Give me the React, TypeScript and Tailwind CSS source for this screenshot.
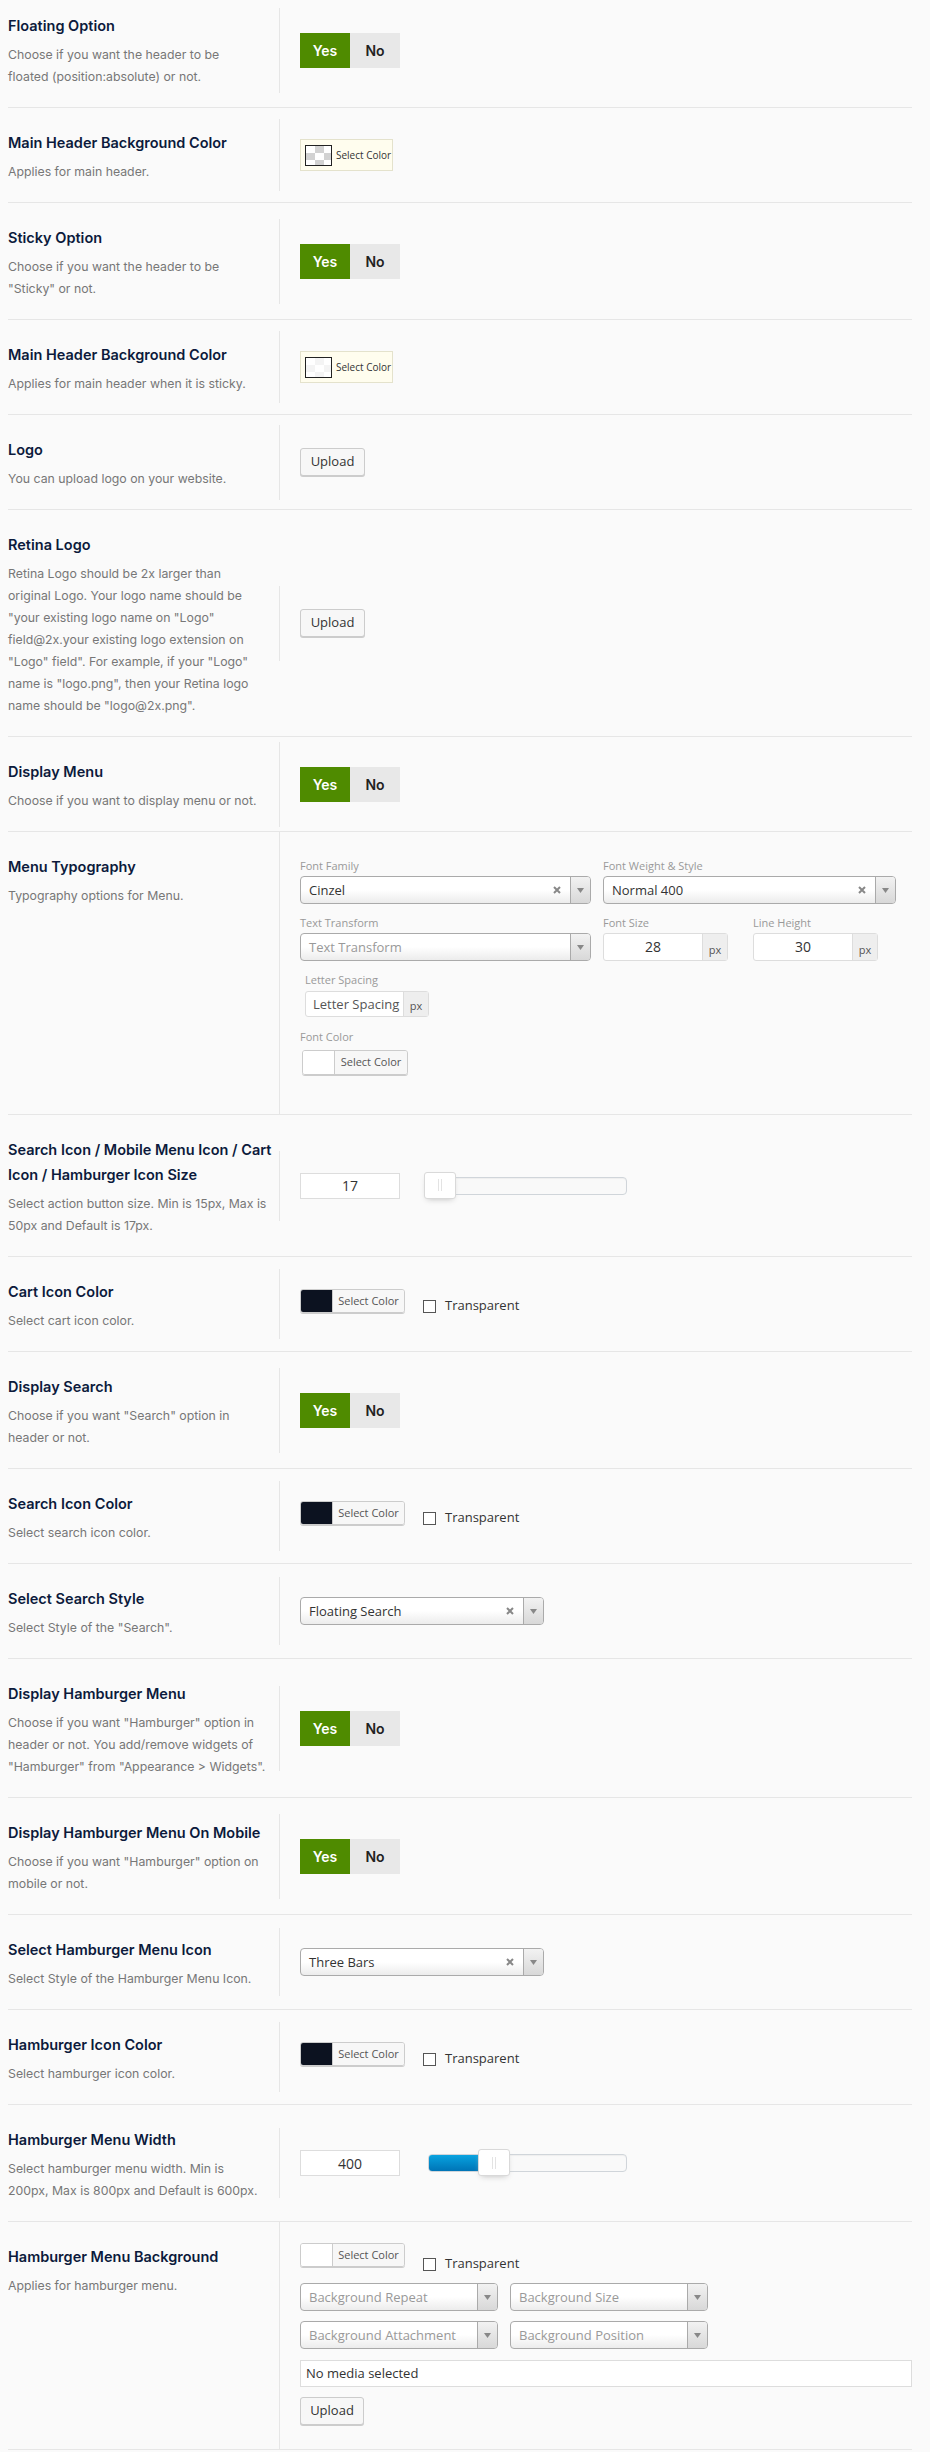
import React from "react";

function Lines({ lines }: { lines: string[] }) {
    return (
        <>
            {lines.map((l, i) => (
                <div key={i} className="whitespace-nowrap">
                    {l}
                </div>
            ))}
        </>
    );
}

function Row({
    title,
    desc,
    first,
    full,
    children,
}: {
    title: string[];
    desc: string[];
    first?: boolean;
    full?: boolean;
    children: React.ReactNode;
}) {
    return (
        <div className={full ? "flex items-stretch border-b border-[#e6e6e6]" : "flex items-center border-b border-[#e6e6e6]"}>
            <div className={first ? "w-[271px] shrink-0 self-start pt-[13px] pb-[19px]" : "w-[271px] shrink-0 self-start pt-[22px] pb-[19px]"}>
                <div className="text-[14.5px] leading-[25px] font-semibold text-[#0c1a3c]">
                    <Lines lines={title} />
                </div>
                <div className="mt-[6px] text-[12.3px] leading-[22px] text-[#777]">
                    <Lines lines={desc} />
                </div>
            </div>
            <div
                className={
                    full
                        ? "flex-1 border-l border-[#e6e6e6] pl-5"
                        : first
                        ? "mb-[7px] flex-1 border-l border-[#e6e6e6] py-5 pl-5"
                        : "flex-1 border-l border-[#e6e6e6] py-5 pl-5"
                }
            >
                {children}
            </div>
        </div>
    );
}

function Toggle() {
    return (
        <div className="flex py-[5px] text-[14px] font-semibold">
            <span className="flex h-[35px] w-[50px] items-center justify-center bg-[#4f8b00] text-white">Yes</span>
            <span className="flex h-[35px] w-[50px] items-center justify-center bg-[#e8e8e8] text-[#222]">No</span>
        </div>
    );
}

function LightColor({ faint }: { faint?: boolean }) {
    return (
        <div className="flex h-[32px] w-[93px] items-center border border-[#e4e2cc] bg-[#fffdee] pl-[4px] font-['Open_Sans',sans-serif]">
            <span
                className={
                    faint
                        ? "h-[21px] w-[27px] border border-[#222] bg-[conic-gradient(#f4f4f4_25%,#fff_0_50%,#f4f4f4_0_75%,#fff_0)] bg-[length:18px_14px]"
                        : "h-[21px] w-[27px] border border-[#222] bg-[conic-gradient(#d2d2d2_25%,#fff_0_50%,#d2d2d2_0_75%,#fff_0)] bg-[length:18px_14px]"
                }
            />
            <span className="ml-[4px] text-[10px] text-[#333]">Select Color</span>
        </div>
    );
}

function ColorButton({ swatch, wide }: { swatch: "dark" | "white"; wide?: boolean }) {
    return (
        <div className={wide ? "flex h-[25px] w-[106px] overflow-hidden rounded-[3px] border border-[#ccc] shadow-[0_1px_0_#ccc]" : "flex h-[24px] w-[105px] overflow-hidden rounded-[3px] border border-[#ccc] shadow-[0_1px_0_#ccc]"}>
            <span className={swatch === "dark" ? "w-[31px] bg-[#0c1220]" : "w-[31px] bg-white"} />
            <span className="flex flex-1 items-center justify-center border-l border-[#ccc] bg-[#f7f7f7] font-['Open_Sans',sans-serif] text-[11px] text-[#555]">
                Select Color
            </span>
        </div>
    );
}

function Transparent({ className }: { className: string }) {
    return (
        <label className={className}>
            <span className="h-[13px] w-[13px] border border-[#555] bg-white" />
            <span className="font-['Open_Sans',sans-serif] text-[13px] text-[#333]">Transparent</span>
        </label>
    );
}

function ColorRow() {
    return (
        <div className="flex h-[30px] items-start">
            <ColorButton swatch="dark" />
            <Transparent className="mt-[8px] ml-[18px] flex h-[18px] items-center gap-[9px]" />
        </div>
    );
}

function Arrow() {
    return (
        <span className="flex w-[20px] items-center justify-center rounded-r-[3px] border-l border-[#aaa] bg-linear-to-b from-[#f2f2f2] to-[#d8d8d8]">
            <svg width="7" height="5" viewBox="0 0 7 5">
                <path d="M0 0h7L3.5 5z" fill="#888" />
            </svg>
        </span>
    );
}

function Select({
    width,
    value,
    placeholder,
}: {
    width: string;
    value?: string;
    placeholder?: string;
}) {
    return (
        <div className={`${width} flex h-[28px] rounded-[4px] border border-[#aaa] bg-linear-to-b from-white from-50% to-[#ececec] font-['Open_Sans',sans-serif] text-[13px]`}>
            <span className={value ? "flex-1 truncate pl-[8px] leading-[26px] text-[#333]" : "flex-1 truncate pl-[8px] leading-[26px] text-[#999]"}>
                {value || placeholder}
            </span>
            {value && (
                <span className="flex w-[26px] items-center justify-center">
                    <svg width="8" height="8" viewBox="0 0 8 8">
                        <path d="M1 1l6 6M7 1L1 7" stroke="#888" strokeWidth="2" />
                    </svg>
                </span>
            )}
            <Arrow />
        </div>
    );
}

function Upload({ narrow }: { narrow?: boolean }) {
    return (
        <div className={narrow ? "flex h-[28px] w-[64px] items-center justify-center rounded-[3px] border border-[#ccc] bg-[#f7f7f7] font-['Open_Sans',sans-serif] text-[13px] text-[#333] shadow-[0_1px_0_#ccc]" : "flex h-[28px] w-[65px] items-center justify-center rounded-[3px] border border-[#ccc] bg-[#f7f7f7] font-['Open_Sans',sans-serif] text-[13px] text-[#333] shadow-[0_1px_0_#ccc]"}>
            Upload
        </div>
    );
}

function PxInput({ value, width }: { value: string; width: string }) {
    return (
        <div className={`${width} flex h-[28px] rounded-[3px] border border-[#ddd] bg-white font-['Open_Sans',sans-serif]`}>
            <span className="flex-1 text-center text-[14px] leading-[26px] text-[#333]">{value}</span>
            <span className="flex w-[25px] items-end justify-center border-l border-[#ddd] bg-[#eee] pb-[5px] text-[11px] leading-none text-[#555]">
                px
            </span>
        </div>
    );
}

function FieldLabel({ children }: { children: React.ReactNode }) {
    return <div className="h-[20px] font-['Open_Sans',sans-serif] text-[11px] leading-[20px] text-[#999]">{children}</div>;
}

function Slider({ value, pct }: { value: string; pct: number }) {
    return (
        <div className="flex h-[30px] items-center font-['Open_Sans',sans-serif]">
            <div className="flex h-[26px] w-[100px] items-center justify-center border border-[#ddd] bg-white text-[14px] text-[#333]">
                {value}
            </div>
            <div className="relative ml-[28px] h-[18px] w-[199px] rounded-[4px] border border-[#d0d5da] bg-[#f9f9f9] shadow-[inset_0_1px_1px_#eee]">
                {pct > 10 && (
                    <div
                        className="absolute inset-y-0 left-0 rounded-l-[3px] bg-linear-to-b from-[#0aa3e0] to-[#0074b6]"
                        style={{ width: `${pct}%` }}
                    />
                )}
                <div
                    className="absolute top-[-6px] flex h-[27px] w-[32px] -translate-x-1/2 items-center justify-center gap-[2px] rounded-[3px] border border-[#d9d9d9] bg-white shadow-[0_3px_6px_-3px_#bbb]"
                    style={{ left: `${pct}%` }}
                >
                    <span className="h-[12px] w-px bg-[#e3e3e3]" />
                    <span className="h-[12px] w-px bg-[#e3e3e3]" />
                </div>
            </div>
        </div>
    );
}

export default function App() {
    return (
        <div className="min-h-[2452px] bg-[#fafafa] font-['Inter',sans-serif]">
            <div className="ml-2 w-[904px]">
                <Row first title={["Floating Option"]} desc={["Choose if you want the header to be", "floated (position:absolute) or not."]}>
                    <Toggle />
                </Row>
                <Row title={["Main Header Background Color"]} desc={["Applies for main header."]}>
                    <LightColor />
                </Row>
                <Row title={["Sticky Option"]} desc={["Choose if you want the header to be", "\"Sticky\" or not."]}>
                    <Toggle />
                </Row>
                <Row title={["Main Header Background Color"]} desc={["Applies for main header when it is sticky."]}>
                    <LightColor faint />
                </Row>
                <Row title={["Logo"]} desc={["You can upload logo on your website."]}>
                    <div className="flex h-[35px] items-center">
                        <Upload />
                    </div>
                </Row>
                <Row
                    title={["Retina Logo"]}
                    desc={[
                        "Retina Logo should be 2x larger than",
                        "original Logo. Your logo name should be",
                        "\"your existing logo name on \"Logo\"",
                        "field@2x.your existing logo extension on",
                        "\"Logo\" field\". For example, if your \"Logo\"",
                        "name is \"logo.png\", then your Retina logo",
                        "name should be \"logo@2x.png\".",
                    ]}
                >
                    <div className="flex h-[35px] items-center">
                        <Upload />
                    </div>
                </Row>
                <Row title={["Display Menu"]} desc={["Choose if you want to display menu or not."]}>
                    <Toggle />
                </Row>
                <Row full title={["Menu Typography"]} desc={["Typography options for Menu."]}>
                    <div className="pt-[24px] pb-[39px]">
                        <div className="flex gap-[12px]">
                            <div>
                                <FieldLabel>Font Family</FieldLabel>
                                <Select width="w-[291px]" value="Cinzel" />
                            </div>
                            <div>
                                <FieldLabel>Font Weight &amp; Style</FieldLabel>
                                <Select width="w-[293px]" value="Normal 400" />
                            </div>
                        </div>
                        <div className="mt-[9px] flex">
                            <div>
                                <FieldLabel>Text Transform</FieldLabel>
                                <Select width="w-[291px]" placeholder="Text Transform" />
                            </div>
                            <div className="ml-[12px]">
                                <FieldLabel>Font Size</FieldLabel>
                                <PxInput width="w-[125px]" value="28" />
                            </div>
                            <div className="ml-[25px]">
                                <FieldLabel>Line Height</FieldLabel>
                                <PxInput width="w-[125px]" value="30" />
                            </div>
                        </div>
                        <div className="mt-[9px] ml-[5px]">
                            <FieldLabel>Letter Spacing</FieldLabel>
                            <div className="mt-px flex h-[26px] w-[124px] rounded-[3px] border border-[#ddd] bg-white font-['Open_Sans',sans-serif]">
                                <span className="flex-1 pl-[7px] text-[13px] leading-[24px] text-[#555]">Letter Spacing</span>
                                <span className="flex w-[25px] items-end justify-center border-l border-[#ddd] bg-[#eee] pb-[5px] text-[11px] leading-none text-[#555]">
                                    px
                                </span>
                            </div>
                        </div>
                        <div className="mt-[10px]">
                            <FieldLabel>Font Color</FieldLabel>
                            <div className="mt-[3px] ml-[2px]">
                                <ColorButton swatch="white" wide />
                            </div>
                        </div>
                    </div>
                </Row>
                <Row
                    title={["Search Icon / Mobile Menu Icon / Cart", "Icon / Hamburger Icon Size"]}
                    desc={["Select action button size. Min is 15px, Max is", "50px and Default is 17px."]}
                >
                    <Slider value="17" pct={5.5} />
                </Row>
                <Row title={["Cart Icon Color"]} desc={["Select cart icon color."]}>
                    <ColorRow />
                </Row>
                <Row title={["Display Search"]} desc={["Choose if you want \"Search\" option in", "header or not."]}>
                    <Toggle />
                </Row>
                <Row title={["Search Icon Color"]} desc={["Select search icon color."]}>
                    <ColorRow />
                </Row>
                <Row title={["Select Search Style"]} desc={["Select Style of the \"Search\"."]}>
                    <Select width="w-[244px]" value="Floating Search" />
                </Row>
                <Row
                    title={["Display Hamburger Menu"]}
                    desc={[
                        "Choose if you want \"Hamburger\" option in",
                        "header or not. You add/remove widgets of",
                        "\"Hamburger\" from \"Appearance > Widgets\".",
                    ]}
                >
                    <Toggle />
                </Row>
                <Row title={["Display Hamburger Menu On Mobile"]} desc={["Choose if you want \"Hamburger\" option on", "mobile or not."]}>
                    <Toggle />
                </Row>
                <Row title={["Select Hamburger Menu Icon"]} desc={["Select Style of the Hamburger Menu Icon."]}>
                    <Select width="w-[244px]" value="Three Bars" />
                </Row>
                <Row title={["Hamburger Icon Color"]} desc={["Select hamburger icon color."]}>
                    <ColorRow />
                </Row>
                <Row title={["Hamburger Menu Width"]} desc={["Select hamburger menu width. Min is", "200px, Max is 800px and Default is 600px."]}>
                    <Slider value="400" pct={33.2} />
                </Row>
                <Row full title={["Hamburger Menu Background"]} desc={["Applies for hamburger menu."]}>
                    <div className="pt-[21px] pb-[24px]">
                        <div className="flex h-[30px] items-start">
                            <ColorButton swatch="white" />
                            <Transparent className="mt-[12px] ml-[18px] flex h-[18px] items-center gap-[9px]" />
                        </div>
                        <div className="mt-[10px] flex gap-[12px]">
                            <Select width="w-[198px]" placeholder="Background Repeat" />
                            <Select width="w-[198px]" placeholder="Background Size" />
                        </div>
                        <div className="mt-[10px] flex gap-[12px]">
                            <Select width="w-[198px]" placeholder="Background Attachment" />
                            <Select width="w-[198px]" placeholder="Background Position" />
                        </div>
                        <div className="mt-[11px] flex h-[27px] w-[612px] items-center border border-[#ddd] bg-white pl-[5px] font-['Open_Sans',sans-serif] text-[13px] text-[#333]">
                            No media selected
                        </div>
                        <div className="mt-[10px]">
                            <Upload narrow />
                        </div>
                    </div>
                </Row>
            </div>
        </div>
    );
}
